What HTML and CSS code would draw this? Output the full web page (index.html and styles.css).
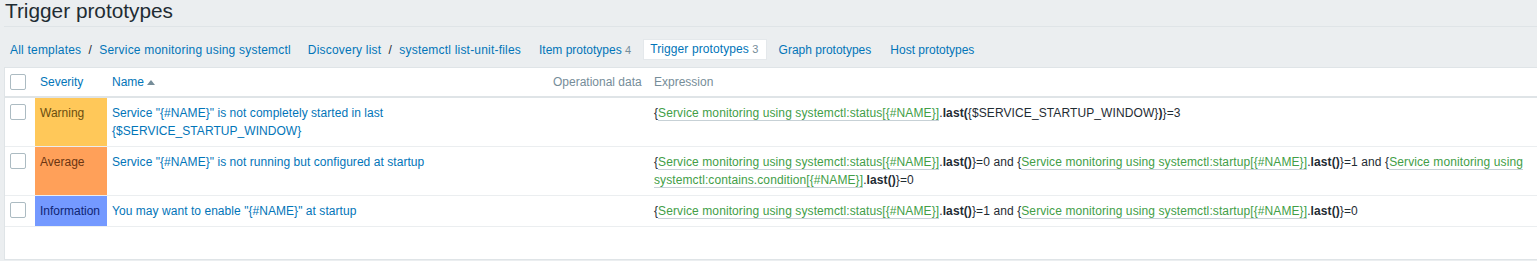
FILE: index.html
```html
<!DOCTYPE html>
<html>
  <head>
    <meta charset="utf-8">
    <title>Trigger prototypes</title>
    <link rel="stylesheet" href="styles.css">
  </head>
  <body>
    <div class="wrapper">
      <h1 class="page-title">Trigger prototypes</h1>

      <nav class="object-nav">
        <ul class="breadcrumbs">
          <li><a href="#">All templates</a></li>
          <li class="sep">/</li>
          <li><a href="#">Service monitoring using systemctl</a></li>
        </ul>
        <ul class="breadcrumbs">
          <li><a href="#">Discovery list</a></li>
          <li class="sep">/</li>
          <li><a href="#">systemctl list-unit-files</a></li>
        </ul>
        <a class="nav-item" href="#">Item prototypes <sup>4</sup></a>
        <span class="nav-item selected">Trigger prototypes <sup>3</sup></span>
        <a class="nav-item" href="#">Graph prototypes</a>
        <a class="nav-item" href="#">Host prototypes</a>
      </nav>

      <div class="table-box">
        <table class="list-table">
          <colgroup>
            <col class="c-check">
            <col class="c-sev">
            <col class="c-name">
            <col class="c-opdata">
            <col>
          </colgroup>
          <thead>
            <tr>
              <th><span class="checkbox"></span></th>
              <th><a href="#">Severity</a></th>
              <th><a href="#">Name</a> <span class="arrow-up"></span></th>
              <th>Operational data</th>
              <th>Expression</th>
            </tr>
          </thead>
          <tbody>
            <tr>
              <td><span class="checkbox"></span></td>
              <td class="sev warning">Warning</td>
              <td class="name"><a href="#">Service "{#NAME}" is not completely started in last {$SERVICE_STARTUP_WINDOW}</a></td>
              <td></td>
              <td class="expr">{<a class="item" href="#">Service monitoring using systemctl:status[{#NAME}]</a>.<b>last(</b>{$SERVICE_STARTUP_WINDOW}<b>)</b>}=3</td>
            </tr>
            <tr>
              <td><span class="checkbox"></span></td>
              <td class="sev average">Average</td>
              <td class="name"><a href="#">Service "{#NAME}" is not running but configured at startup</a></td>
              <td></td>
              <td class="expr">{<a class="item" href="#">Service monitoring using systemctl:status[{#NAME}]</a>.<b>last()</b>}=0 and {<a class="item" href="#">Service monitoring using systemctl:startup[{#NAME}]</a>.<b>last()</b>}=1 and {<a class="item" href="#">Service monitoring using systemctl:contains.condition[{#NAME}]</a>.<b>last()</b>}=0</td>
            </tr>
            <tr>
              <td><span class="checkbox"></span></td>
              <td class="sev information">Information</td>
              <td class="name"><a href="#">You may want to enable "{#NAME}" at startup</a></td>
              <td></td>
              <td class="expr">{<a class="item" href="#">Service monitoring using systemctl:status[{#NAME}]</a>.<b>last()</b>}=1 and {<a class="item" href="#">Service monitoring using systemctl:startup[{#NAME}]</a>.<b>last()</b>}=0</td>
            </tr>
          </tbody>
        </table>
      </div>
    </div>
  </body>
</html>
```

FILE: styles.css
```css
html, body {
  margin: 0;
  background: #ebeef0;
  color: #1f2c33;
  font-family: "Liberation Sans", Arial, sans-serif;
  font-size: 12px;
}
a { color: #0275b8; text-decoration: none; }

.wrapper { padding-left: 4px; }

.page-title {
  margin: 0;
  padding: 0 0 5px 1px;
  font-size: 20.8px;
  line-height: 21px;
  font-weight: normal;
  border-bottom: 1px solid #dfe4e7;
}

/* tabs + breadcrumbs */
.object-nav {
  display: flex;
  align-items: center;
  gap: 5px;
  padding: 12px 0 7px;
  line-height: 20px;
}
.object-nav ul { display: flex; margin: 0; padding: 0; list-style: none; letter-spacing: 0.2px; }
.object-nav ul li a { display: block; padding: 0 6px; }
.object-nav ul li.sep { width: 6px; text-align: center; color: #1f2c33; }
.object-nav .nav-item { display: block; padding: 0 7px; }
.object-nav sup {
  vertical-align: baseline;
  font-size: 11px;
  color: #768d99;
}
.object-nav .nav-item.selected {
  background: #fff;
  color: #0275b8;
  height: 21px;
  box-sizing: border-box;
  border: 1px solid #e4e8eb;
  padding: 0 7px 0 6px;
  line-height: 19px;
  letter-spacing: 0.1px;
}

/* table */
.table-box {
  background: #fff;
  border: 1px solid #dfe4e7;
  border-right: none;
  padding-bottom: 32px;
}
.list-table {
  width: 100%;
  border-collapse: collapse;
  table-layout: fixed;
}
.c-check { width: 30px; }
.c-sev { width: 72px; }
.c-name { width: 441px; }
.c-opdata { width: 101px; }

.list-table th {
  text-align: left;
  font-weight: normal;
  color: #768d99;
  padding: 5px 5px;
  line-height: 18px;
  border-bottom: 2px solid #dfe4e7;
  white-space: nowrap;
}
.list-table td {
  padding: 6px 5px;
  line-height: 18px;
  vertical-align: top;
  border-bottom: 1px solid #ebeef0;
}
.list-table td.name { letter-spacing: 0.05px; }
.list-table td.expr { letter-spacing: 0.1px; }

.checkbox {
  display: block;
  width: 16px;
  height: 16px;
  box-sizing: border-box;
  border: 1px solid #acbbc2;
  border-radius: 2px;
  background: #fff;
}

.arrow-up {
  display: inline-block;
  width: 0;
  height: 0;
  border-left: 4px solid transparent;
  border-right: 4px solid transparent;
  border-bottom: 5px solid #768d99;
  vertical-align: 1px;
}

.sev.warning { background: #ffc859; color: #6b4e10; }
.sev.average { background: #ffa059; color: #6b3512; }
.sev.information { background: #7499ff; color: #0f2573; }

a.item {
  color: #429e47;
  border-bottom: 1px solid #c7d1d6;
}
b { font-weight: bold; }
```
